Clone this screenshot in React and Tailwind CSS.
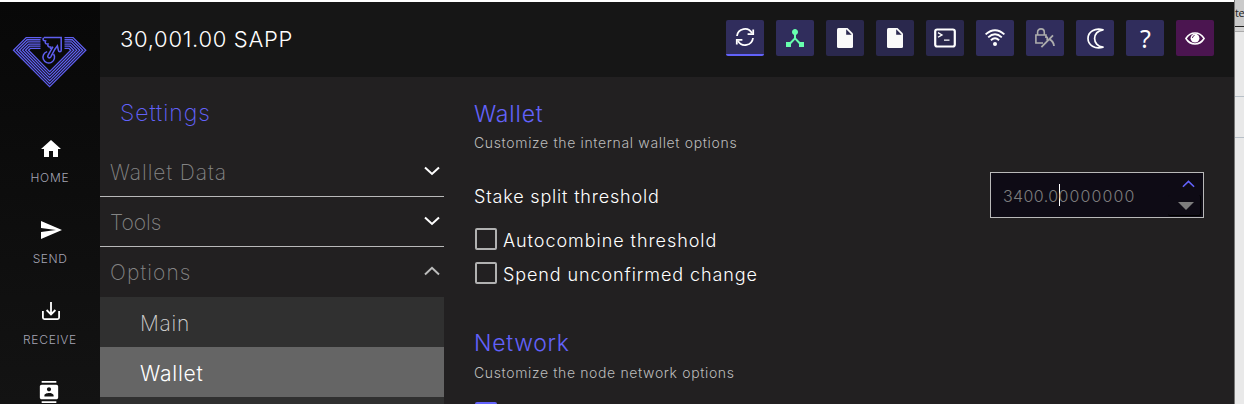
import React from "react";
import { MdHome, MdSend, MdContacts, MdDeviceHub } from "react-icons/md";

function Logo() {
  const rings = [0, 1, 2, 3, 4, 5];
  return (
    <svg width="76" height="54" viewBox="12 35 76 54" fill="none" stroke="#5f5ff0" strokeWidth="1.3">
      {rings.map((i) => {
        const l = 13.5 + i * 3;
        const r = 85.8 - i * 3;
        const top = 37.6 + i * 2.15;
        const d = 50.3 - top;
        return (
          <path
            key={i}
            d={`M${i === 0 ? 41.5 : 40.5} ${top}H${l + d}L${l} 50.3L49.6 ${86.6 - i * 3}L${r} 50.3L${r - d} ${top}H64.5`}
          />
        );
      })}
      <path strokeWidth="1.5" d="M44 37.6H61.2V50.6Q61.2 51.8 59.8 51.8Q58.6 51.8 58.4 50.4L57.4 45.8L54.9 49.2L50.8 56.8Q49.8 58.4 48.4 57.6Q47.2 56.8 48 55.4L53 46.6M43.6 37.6Q42.4 39.4 43.8 40.6L45.6 41Q44.6 43 46.2 43.8L48 44Q47.2 45.8 48.8 46.8L50.8 47.2L50.4 49" />
      <path strokeWidth="1.5" d="M47.2 51.6A5.8 5.8 0 1 0 53.6 54" />
    </svg>
  );
}

function SyncIcon() {
  return (
    <svg width="20" height="20" viewBox="0 0 20 20" fill="none" stroke="#fff" strokeWidth="1.8">
      <path d="M2 9A8 8 0 0 1 17 6.2M18 11A8 8 0 0 1 3 13.8" />
      <path d="M18.2 2.4V7.2H12.6M1.8 17.6V12.8H7.4" />
    </svg>
  );
}

function FileIcon() {
  return (
    <svg width="16" height="20" viewBox="0 0 16 20">
      <path d="M1.5 0H10.5L16 5.5V18.5Q16 20 14.5 20H1.5Q0 20 0 18.5V1.5Q0 0 1.5 0Z" fill="#fafafa" />
      <path d="M9.2 1.3V6.8H14.7Z" fill="#2c2a52" />
    </svg>
  );
}

function TerminalIcon() {
  return (
    <svg width="22" height="20" viewBox="0 0 22 20" fill="none" stroke="#fff">
      <rect x="1.2" y="1.5" width="19.6" height="17" rx="2" strokeWidth="2.2" />
      <path d="M4 4.6L8 6.9L4 9.2M10 12.2H15.5" strokeWidth="1.3" />
    </svg>
  );
}

function WifiIcon() {
  return (
    <svg width="20" height="18" viewBox="0 0 20 18" fill="none" stroke="#fff" strokeWidth="1.9">
      <path d="M.6 5.4Q10-2.8 19.4 5.4M3.2 8.4Q10 2.2 16.8 8.4M5.9 11.2Q10 7.4 14.1 11.2" />
      <circle cx="10" cy="15" r="2" fill="#fff" stroke="none" />
    </svg>
  );
}

function LockIcon() {
  return (
    <svg width="20" height="20" viewBox="0 0 20 20" fill="none" stroke="#adadad" strokeWidth="1.6">
      <path d="M8 15H.9V7H11V10M2.6 7V4.2Q2.6.9 6 .9Q9.3.9 9.3 4.2V7" />
      <path d="M6.4 19.2L18 7.4" strokeWidth="1.8" />
      <path d="M10.5 8.8Q13.2 8.6 12 12.6M14.6 11.4Q18.6 13.6 19 18" strokeWidth="1.8" />
    </svg>
  );
}

function MoonIcon() {
  return (
    <svg width="17" height="21" viewBox="0 0 17 21" fill="none" stroke="#fff" strokeWidth="1.7" strokeLinejoin="round">
      <path d="M16 1.8C4.8 3.2 4.8 17.8 16 19.2C8 21.6 1 17.2 1 10.5C1 3.8 8-.6 16 1.8Z" />
    </svg>
  );
}

function EyeIcon() {
  return (
    <svg width="20" height="13" viewBox="0 0 20 13">
      <path d="M.9 6.5Q4.3 1 10 1Q15.7 1 19.1 6.5Q15.7 12 10 12Q4.3 12 .9 6.5Z" fill="none" stroke="#fff" strokeWidth="1.5" />
      <circle cx="10" cy="6.2" r="4.4" fill="#fff" />
      <path d="M7.4 6Q7.6 3.8 9.6 3.4" fill="none" stroke="#4b1550" strokeWidth="0.9" />
    </svg>
  );
}

function ReceiveIcon() {
  return (
    <svg width="18" height="18" viewBox="0 0 18 18" fill="none" stroke="#fff" strokeWidth="1.8">
      <path d="M.9 9V15.6Q.9 17.1 2.4 17.1H15.6Q17.1 17.1 17.1 15.6V9M9 0V12M4.6 8L9 12.4L13.4 8" />
    </svg>
  );
}

function Chevron({ up, className }) {
  return (
    <svg width="16" height="10" viewBox="0 0 16 10" fill="none" stroke="currentColor" strokeWidth="2" className={className}>
      <path d={up ? "M1 8.4L8 1.8L15 8.4" : "M1 1.4L8 8L15 1.4"} />
    </svg>
  );
}

function NavItem({ icon, label, className }) {
  return (
    <div className="flex h-[81px] shrink-0 flex-col items-center">
      <div className="ml-[2px] flex h-6 w-6 items-center justify-center text-white">{icon}</div>
      <div className={"mt-[9px] text-[12px] leading-4 font-light text-[#a4a4b4] " + className}>{label}</div>
    </div>
  );
}

const tools = [
  { bg: "bg-[#302d5c] border-b-2 border-[#6262fa]", icon: <SyncIcon /> },
  { bg: "bg-[#302d5c]", icon: <MdDeviceHub size={24} color="#67ffae" /> },
  { bg: "bg-[#2a284d]", icon: <FileIcon /> },
  { bg: "bg-[#2a284d]", icon: <FileIcon /> },
  { bg: "bg-[#2a284d]", icon: <TerminalIcon /> },
  { bg: "bg-[#302d5c]", icon: <WifiIcon /> },
  { bg: "bg-[#302d5c]", icon: <LockIcon /> },
  { bg: "bg-[#302d5c]", icon: <MoonIcon /> },
  { bg: "bg-[#302d5c]", icon: <span className="pl-px font-['Noto_Sans',sans-serif] text-[25px] leading-none text-white">?</span> },
  { bg: "bg-[#4b1550]", icon: <EyeIcon /> },
];

function MenuRow({ label, open, className }) {
  return (
    <div className={"flex h-[50px] items-center justify-between border-b pr-1 pl-[10px] " + (open ? "border-transparent" : "border-[#b9b9b9]")}>
      <span className={"pt-[2px] text-[21px] leading-none font-extralight text-[#858585] " + className}>{label}</span>
      <Chevron up={open} className={open ? "mb-[2px] text-[#bdbdbd]" : "mb-[2px] text-white"} />
    </div>
  );
}

function Check({ label, className }) {
  return (
    <div className="flex h-[34px] items-center gap-[6px]">
      <div className="h-[22px] w-[22px] rounded-[2px] border-2 border-[#b1b1b1]" />
      <span className={"pt-[3px] text-[18px] leading-none font-light text-white " + className}>{label}</span>
    </div>
  );
}

export default function App() {
  return (
    <div className="flex h-[404px] w-[1244px] overflow-hidden bg-[#222021] font-['Inter',sans-serif]">
      <div className="flex w-[1234px] shrink-0 flex-col">
        <div className="h-[2px] shrink-0 bg-white" />
        <div className="flex h-[402px]">
          <nav className="flex w-[100px] shrink-0 flex-col overflow-hidden bg-linear-to-b from-[#080808] to-[#131313]">
            <div className="ml-3 h-[135px] shrink-0 pt-[33px]">
              <Logo />
            </div>
            <NavItem icon={<MdHome size={24} />} label="HOME" className="tracking-[0.8px]" />
            <NavItem icon={<MdSend size={24} />} label="SEND" className="tracking-[0.55px]" />
            <NavItem icon={<ReceiveIcon />} label="RECEIVE" className="tracking-[0.7px]" />
            <NavItem icon={<MdContacts size={22} className="mr-[4px] shrink-0" />} label="" className="" />
          </nav>
          <div className="flex flex-1 flex-col">
            <header className="flex h-[75px] shrink-0 justify-between bg-[#161616] px-5 pt-[18px]">
              <span className="flex h-9 items-center pt-[2px] text-[22px] leading-none font-light tracking-[0.7px] text-white">30,001.00 SAPP</span>
              <div className="flex gap-3">
                {tools.map((t, i) => (
                  <div key={i} className={"flex h-9 w-[38px] items-center justify-center rounded-[2px] " + t.bg}>
                    {t.icon}
                  </div>
                ))}
              </div>
            </header>
            <div className="flex h-[327px]">
              <aside className="w-[344px] shrink-0">
                <h2 className="flex h-[70px] items-center pt-[3px] pl-5 text-[23px] leading-none font-extralight tracking-[0.95px] text-[#6262fa]">Settings</h2>
                <MenuRow label="Wallet Data" className="tracking-[0.95px]" />
                <MenuRow label="Tools" className="tracking-normal" />
                <MenuRow label="Options" open className="tracking-[1.1px]" />
                <div className="flex h-[50px] items-center bg-[#303030] pt-[3px] pl-10 text-[21px] leading-none font-extralight tracking-[0.7px] text-[#d0d0d0]">Main</div>
                <div className="flex h-[50px] items-center bg-[#656565] pt-[3px] pl-10 text-[21px] leading-none font-light tracking-[0.75px] text-white">Wallet</div>
                <div className="h-[7px] bg-[#303030]" />
              </aside>
              <main className="flex-1 px-[30px]">
                <h2 className="flex h-[54px] items-end pb-[5px] text-[23px] leading-none font-light tracking-[0.8px] text-[#6262fa]">Wallet</h2>
                <p className="flex h-[24px] items-center text-[14px] leading-none font-light tracking-[0.65px] text-[#bcbcbc]">Customize the internal wallet options</p>
                <div className="mt-[17px] flex h-[46px] items-center justify-between">
                  <span className="pt-[3px] text-[18px] leading-none font-light tracking-[0.82px] text-white">Stake split threshold</span>
                  <div className="flex h-[46px] w-[214px] items-center border border-[#b9b9b9] bg-[#0e0b15] pl-3">
                    <div className="flex flex-1 items-center text-[16px] leading-none font-light text-[#7d7d7d]">
                      <span className="pt-[2px] tracking-[0.4px]">3400.0</span>
                      <span className="-mr-px h-[22px] w-px bg-white" />
                      <span className="pt-[2px] tracking-[1.1px]">0000000</span>
                    </div>
                    <div className="flex h-[44px] w-[35px] flex-col pr-[2px]">
                      <div className="flex h-[22px] items-center justify-center pl-2">
                        <Chevron up className="h-[8px] w-[13px] text-[#6262fa]" />
                      </div>
                      <div className="flex h-[21px] items-center justify-center rounded-[2px] border-r border-b border-black bg-[#0e0b15] pt-px pl-1">
                        <svg width="16" height="8" viewBox="0 0 16 8">
                          <path d="M0 0H16L8 8Z" fill="#7d7d7d" />
                        </svg>
                      </div>
                    </div>
                  </div>
                </div>
                <div className="mt-1 pl-px">
                  <Check label="Autocombine threshold" className="tracking-[0.95px]" />
                  <Check label="Spend unconfirmed change" className="tracking-[0.9px]" />
                </div>
                <h2 className="mt-[41px] flex h-[24px] items-center text-[23px] leading-none font-light tracking-[0.7px] text-[#6262fa]">Network</h2>
                <p className="mt-[6px] flex h-[24px] items-center text-[14px] leading-none font-light tracking-[0.63px] text-[#bcbcbc]">Customize the node network options</p>
                <div className="mt-[17px] ml-px h-[22px] w-[22px] rounded-[2px] bg-[#6262fa]" />
              </main>
            </div>
          </div>
        </div>
      </div>
      <div className="flex w-[10px] shrink-0 flex-col border-l border-[#777] bg-[#e9e9e9]">
        <div className="h-[26px] bg-[#cacaca] pt-[6px] font-['Open_Sans',sans-serif] text-[11px] leading-[14px] tracking-[-0.4px] text-[#222]">te</div>
        <div className="h-px bg-[#222]" />
        <div className="h-1 bg-[#d4d4d4]" />
        <div className="h-px bg-[#aaa]" />
        <div className="mt-16 h-px bg-[#b8c0c8]" />
        <div className="mt-10 h-px bg-[#b8c0c8]" />
      </div>
    </div>
  );
}
